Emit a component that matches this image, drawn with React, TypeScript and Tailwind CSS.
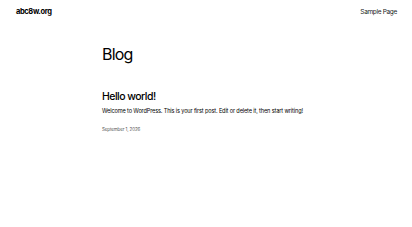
export default function App() {
  return (
    <div className="min-h-[227px] bg-white text-black" style={{ fontFamily: 'Inter, "Liberation Sans", sans-serif' }}>
      <header className="flex items-center justify-between pl-4 pr-[15px] pt-[6px] text-[7px] leading-[12px]">
        <a className="block text-[7.5px] font-bold tracking-tighter">abc8w.org</a>
        <nav className="block">
          <a className="block text-[6.5px] tracking-tighter text-[#222]">Sample Page</a>
        </nav>
      </header>

      <main className="mx-auto w-[208px] pt-[28px]">
        <h1 className="text-[16px] leading-none tracking-tighter">Blog</h1>

        <article className="pt-[30px]">
          <h2 className="text-[10.5px] font-medium leading-none tracking-tighter">Hello world!</h2>
          <p className="pt-[6.5px] text-[5.6px] leading-none tracking-tight">
            Welcome to WordPress. This is your first post. Edit or delete it, then start writing!
          </p>
          <p className="pt-[13px] text-[4.5px] leading-none tracking-tight text-[#555]">September 1, 2026</p>
        </article>
      </main>
    </div>
  )
}
